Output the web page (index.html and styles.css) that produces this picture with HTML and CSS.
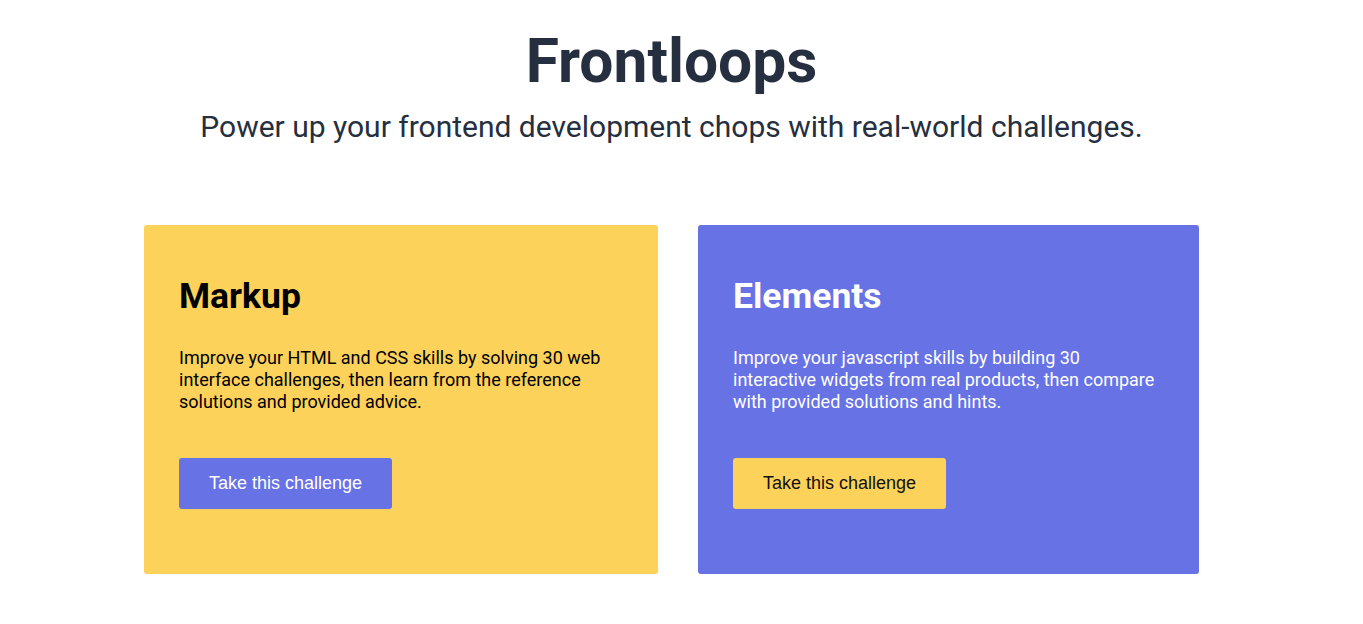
FILE: index.html
```html
<!DOCTYPE html>
<html lang="en">
<head>
<meta charset="utf-8">
<title>Frontloops</title>
<link rel="stylesheet" href="styles.css">
</head>
<body>
<div class="page">
  <header class="hero">
    <h1 class="hero-title">Frontloops</h1>
    <p class="hero-sub">Power up your frontend development chops with real-world challenges.</p>
  </header>
  <section class="cards">
    <article class="card card-markup">
      <h2 class="card-title">Markup</h2>
      <p class="card-text">Improve your HTML and CSS skills by solving 30 web interface challenges, then learn from the reference solutions and provided advice.</p>
      <a class="btn btn-blue" href="#">Take this challenge</a>
    </article>
    <article class="card card-elements">
      <h2 class="card-title">Elements</h2>
      <p class="card-text">Improve your javascript skills by building 30 interactive widgets from real products, then compare with provided solutions and hints.</p>
      <a class="btn btn-yellow" href="#">Take this challenge</a>
    </article>
  </section>
  <div class="more"></div>
</div>
</body>
</html>
```

FILE: styles.css
```css
html, body {
  margin: 0;
  padding: 0;
  background: #ffffff;
}
body {
  font-family: Roboto, "Noto Sans", sans-serif;
  color: #252f40;
}
.page {
  padding-right: 20px;
}
.hero {
  text-align: center;
  padding-top: 27px;
}
.hero-title {
  margin: 0;
  font-size: 60.5px;
  font-weight: 700;
  line-height: 70px;
  color: #252f40;
}
.hero-sub {
  margin: 12px 0 0;
  font-size: 30px;
  font-weight: 400;
  line-height: 36px;
  color: #252f40;
}
.cards {
  display: grid;
  grid-template-columns: 514px 501px;
  column-gap: 40px;
  justify-content: center;
  margin-top: 80px;
}
.card {
  border-radius: 3px;
  padding: 50px 35px 65px;
  display: flex;
  flex-direction: column;
  align-items: flex-start;
}
.card-markup {
  background: #fdd25a;
  color: #000;
}
.card-elements {
  background: #6772e5;
  color: #fff;
}
.card-title {
  margin: 0;
  font-size: 35.5px;
  font-weight: 700;
  line-height: 42px;
}
.card-text {
  margin: 30px 0 0;
  font-size: 18px;
  line-height: 22px;
}
.btn {
  display: inline-block;
  margin-top: 45px;
  padding: 15px 30px;
  border-radius: 3px;
  font-family: "Liberation Sans", Arial, sans-serif;
  font-size: 18px;
  line-height: 21px;
  text-decoration: none;
}
.btn-blue {
  background: #6772e5;
  color: #fff;
}
.btn-yellow {
  background: #fdd25a;
  color: #111;
}
.more {
  height: 2800px;
}
```
